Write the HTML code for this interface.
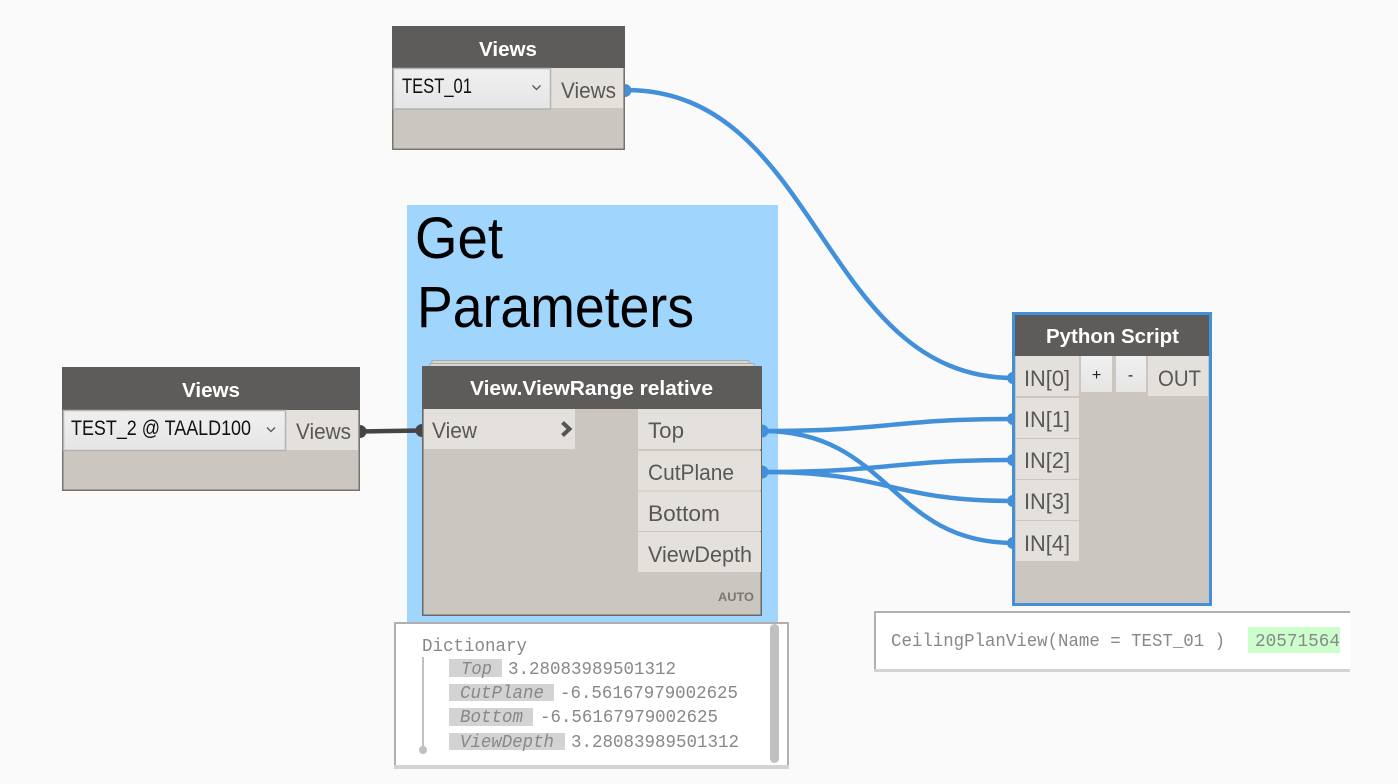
<!DOCTYPE html>
<html><head><meta charset="utf-8"><style>
html,body{margin:0;padding:0;background:#fafafa;width:1398px;height:784px;overflow:hidden}
svg{display:block}
text{font-family:"Liberation Sans",sans-serif}
.h{font-size:20px;font-weight:bold;fill:#fff}
.p{font-size:22px;fill:#5a5856}
.d{font-size:21px;fill:#111}
.m{font-family:"Liberation Mono",monospace;font-size:18px;fill:#888}
.i{font-family:"Liberation Mono",monospace;font-size:18px;fill:#888;font-style:italic}
</style></head><body>
<svg width="1398" height="784" viewBox="0 0 1398 784" xmlns="http://www.w3.org/2000/svg">
<rect width="1398" height="784" fill="#fafafa"/>

<!-- Group -->
<rect x="407" y="205" width="371" height="418" fill="#a0d6fd"/>
<text x="415" y="258" font-size="58" fill="#000" textLength="88" lengthAdjust="spacingAndGlyphs">Get</text>
<text x="417" y="327" font-size="58" fill="#000" textLength="277" lengthAdjust="spacingAndGlyphs">Parameters</text>

<!-- Wires -->
<g fill="none" stroke="#4390da" stroke-width="4.500">
<path d="M626 90C820 90 820 378 1014 378"/>
<path d="M763 431C890 431 890 419 1014 419"/>
<path d="M763 431C890 431 890 543 1014 543"/>
<path d="M763 472C890 472 890 460 1014 460"/>
<path d="M763 472C890 472 890 501 1014 501"/>
</g>
<path d="M360 431.500L422 430.500" stroke="#454545" stroke-width="4.500" fill="none"/>

<!-- Node 1 -->
<rect x="392.750" y="26.750" width="231.500" height="122.500" fill="#cbc6bf" stroke="#77746f" stroke-width="1.500"/>
<rect x="392" y="26" width="233" height="42" fill="#5e5c5a"/>
<rect x="551" y="68" width="72" height="40" fill="#e4e1dc"/>
<defs><linearGradient id="g" x1="0" y1="0" x2="0" y2="1"><stop offset="0" stop-color="#f0f0f0"/><stop offset="1" stop-color="#e5e5e5"/></linearGradient></defs>
<rect x="393.500" y="68.500" width="157" height="40.500" fill="url(#g)" stroke="#b4b4b4" stroke-width="1.500"/>
<text class="h" x="479" y="56" textLength="58" lengthAdjust="spacingAndGlyphs">Views</text>
<text class="d" x="402" y="93" textLength="70" lengthAdjust="spacingAndGlyphs">TEST_01</text>
<path d="M532.500 85.500L536.500 89.500L540.500 85.500" fill="none" stroke="#555" stroke-width="1.300"/>
<text class="p" x="561" y="98" textLength="55" lengthAdjust="spacingAndGlyphs">Views</text>
<path d="M625 84A6.500 6.500 0 0 1 625 97Z" fill="#4390da"/>

<!-- Node 2 -->
<rect x="62.750" y="367.750" width="296.500" height="122.500" fill="#cbc6bf" stroke="#77746f" stroke-width="1.500"/>
<rect x="62" y="367" width="298" height="43" fill="#5e5c5a"/>
<rect x="286" y="410" width="72" height="40" fill="#e4e1dc"/>
<rect x="63.500" y="410.500" width="222" height="40" fill="url(#g)" stroke="#b4b4b4" stroke-width="1.500"/>
<text class="h" x="182" y="397" textLength="58" lengthAdjust="spacingAndGlyphs">Views</text>
<text class="d" x="71" y="435" textLength="180" lengthAdjust="spacingAndGlyphs">TEST_2 @ TAALD100</text>
<path d="M267 427.500L271 431.500L275 427.500" fill="none" stroke="#555" stroke-width="1.300"/>
<text class="p" x="296" y="439" textLength="55" lengthAdjust="spacingAndGlyphs">Views</text>
<path d="M360 425A6.500 6.500 0 0 1 360 438Z" fill="#454545"/>
<path d="M422 424A6.500 6.500 0 0 0 422 437Z" fill="#454545"/>

<!-- Node 3 stacks -->
<rect x="432" y="360.500" width="317" height="8" fill="#d8d5cf" stroke="#aaa"/>
<rect x="430" y="363.500" width="324" height="8" fill="#d8d5cf" stroke="#aaa"/>
<!-- Node 3 -->
<rect x="422.750" y="366.750" width="338.500" height="248.500" fill="#cbc6bf" stroke="#6a6864" stroke-width="1.500"/>
<rect x="422" y="366" width="340" height="43" fill="#5e5c5a"/>
<rect x="424" y="409" width="151" height="40" fill="#e4e1dc"/>
<rect x="638" y="409" width="123" height="40" fill="#e4e1dc"/>
<rect x="638" y="451" width="123" height="39.500" fill="#e4e1dc"/>
<rect x="638" y="491.500" width="123" height="39.500" fill="#e4e1dc"/>
<rect x="638" y="532" width="123" height="40" fill="#e4e1dc"/>
<text class="h" x="470" y="395" textLength="243" lengthAdjust="spacingAndGlyphs">View.ViewRange relative</text>
<text class="p" x="432" y="438" textLength="45" lengthAdjust="spacingAndGlyphs">View</text>
<path d="M562.500 422.500L569.500 429L562.500 435.500" fill="none" stroke="#555" stroke-width="4"/>
<text class="p" x="648" y="438" textLength="36" lengthAdjust="spacingAndGlyphs">Top</text>
<text class="p" x="648" y="480" textLength="86" lengthAdjust="spacingAndGlyphs">CutPlane</text>
<text class="p" x="648" y="521" textLength="72" lengthAdjust="spacingAndGlyphs">Bottom</text>
<text class="p" x="648" y="562" textLength="104" lengthAdjust="spacingAndGlyphs">ViewDepth</text>
<text x="718" y="601" font-size="12" font-weight="bold" fill="#7a7770" textLength="36" lengthAdjust="spacingAndGlyphs">AUTO</text>
<path d="M762 424.500A6.500 6.500 0 0 1 762 437.500Z" fill="#4390da"/>
<path d="M762 465.500A6.500 6.500 0 0 1 762 478.500Z" fill="#4390da"/>

<!-- Python -->
<rect x="1013.500" y="313.500" width="197" height="291" fill="#cbc6bf" stroke="#4390da" stroke-width="3"/>
<rect x="1015" y="315" width="194" height="41" fill="#5e5c5a"/>
<g fill="#e4e1dc">
<rect x="1016" y="356" width="63" height="40"/>
<rect x="1016" y="398" width="63" height="40"/>
<rect x="1016" y="439" width="63" height="40"/>
<rect x="1016" y="480" width="63" height="40"/>
<rect x="1016" y="521" width="63" height="40"/>
<rect x="1148" y="356" width="60" height="40"/>
</g>
<rect x="1081" y="356" width="31" height="36" fill="url(#g)"/>
<rect x="1116" y="356" width="30" height="36" fill="url(#g)"/>
<text class="h" x="1046" y="343" textLength="133" lengthAdjust="spacingAndGlyphs">Python Script</text>
<text class="p" x="1024" y="386" textLength="46" lengthAdjust="spacingAndGlyphs">IN[0]</text>
<text class="p" x="1024" y="427" textLength="46" lengthAdjust="spacingAndGlyphs">IN[1]</text>
<text class="p" x="1024" y="468" textLength="46" lengthAdjust="spacingAndGlyphs">IN[2]</text>
<text class="p" x="1024" y="509" textLength="46" lengthAdjust="spacingAndGlyphs">IN[3]</text>
<text class="p" x="1024" y="551" textLength="46" lengthAdjust="spacingAndGlyphs">IN[4]</text>
<text class="p" x="1158" y="386" textLength="43" lengthAdjust="spacingAndGlyphs">OUT</text>
<text x="1096.500" y="380" font-size="16" fill="#222" text-anchor="middle">+</text>
<text x="1130.500" y="380" font-size="16" fill="#222" text-anchor="middle">-</text>
<g fill="#4390da">
<path d="M1013 372A6 6 0 0 0 1013 384Z"/>
<path d="M1013 413A6 6 0 0 0 1013 425Z"/>
<path d="M1013 454A6 6 0 0 0 1013 466Z"/>
<path d="M1013 495A6 6 0 0 0 1013 507Z"/>
<path d="M1013 537A6 6 0 0 0 1013 549Z"/>
</g>

<!-- Watch 1 -->
<rect x="394" y="622" width="395" height="146" fill="#b0b0b0"/>
<rect x="394" y="765" width="395" height="4" fill="#d3d3d3"/>
<rect x="396" y="624" width="391" height="141" fill="#fff"/>
<rect x="770" y="624" width="9" height="139" rx="4.500" fill="#c0c0c0"/>
<rect x="422" y="657" width="2" height="92" fill="#c0c0c0"/>
<circle cx="423" cy="750" r="4" fill="#c0c0c0"/>
<g fill="#d3d3d3">
<rect x="449" y="659" width="53" height="18"/>
<rect x="449" y="684" width="105" height="17"/>
<rect x="449" y="708" width="84" height="18"/>
<rect x="449" y="733" width="116" height="17"/>
</g>
<text class="m" x="422" y="651" textLength="105" lengthAdjust="spacingAndGlyphs">Dictionary</text>
<text class="i" x="461" y="674" textLength="31" lengthAdjust="spacingAndGlyphs">Top</text>
<text class="m" x="508" y="674" textLength="168" lengthAdjust="spacingAndGlyphs">3.28083989501312</text>
<text class="i" x="460" y="698" textLength="84" lengthAdjust="spacingAndGlyphs">CutPlane</text>
<text class="m" x="560" y="698" textLength="178" lengthAdjust="spacingAndGlyphs">-6.56167979002625</text>
<text class="i" x="460" y="722" textLength="63" lengthAdjust="spacingAndGlyphs">Bottom</text>
<text class="m" x="540" y="722" textLength="178" lengthAdjust="spacingAndGlyphs">-6.56167979002625</text>
<text class="i" x="460" y="747" textLength="94" lengthAdjust="spacingAndGlyphs">ViewDepth</text>
<text class="m" x="571" y="747" textLength="168" lengthAdjust="spacingAndGlyphs">3.28083989501312</text>

<!-- Watch 2 -->
<rect x="874" y="611" width="476" height="61" fill="#d3d3d3"/>
<rect x="874" y="611" width="476" height="58" fill="#b0b0b0"/>
<rect x="876" y="613" width="474" height="56" fill="#fff"/>
<rect x="1248" y="627" width="92" height="26" fill="#ccffcc"/>
<text class="m" x="891" y="646" textLength="334" lengthAdjust="spacingAndGlyphs">CeilingPlanView(Name = TEST_01 )</text>
<text class="m" x="1255" y="646" textLength="85" lengthAdjust="spacingAndGlyphs">20571564</text>
</svg>
</body></html>
